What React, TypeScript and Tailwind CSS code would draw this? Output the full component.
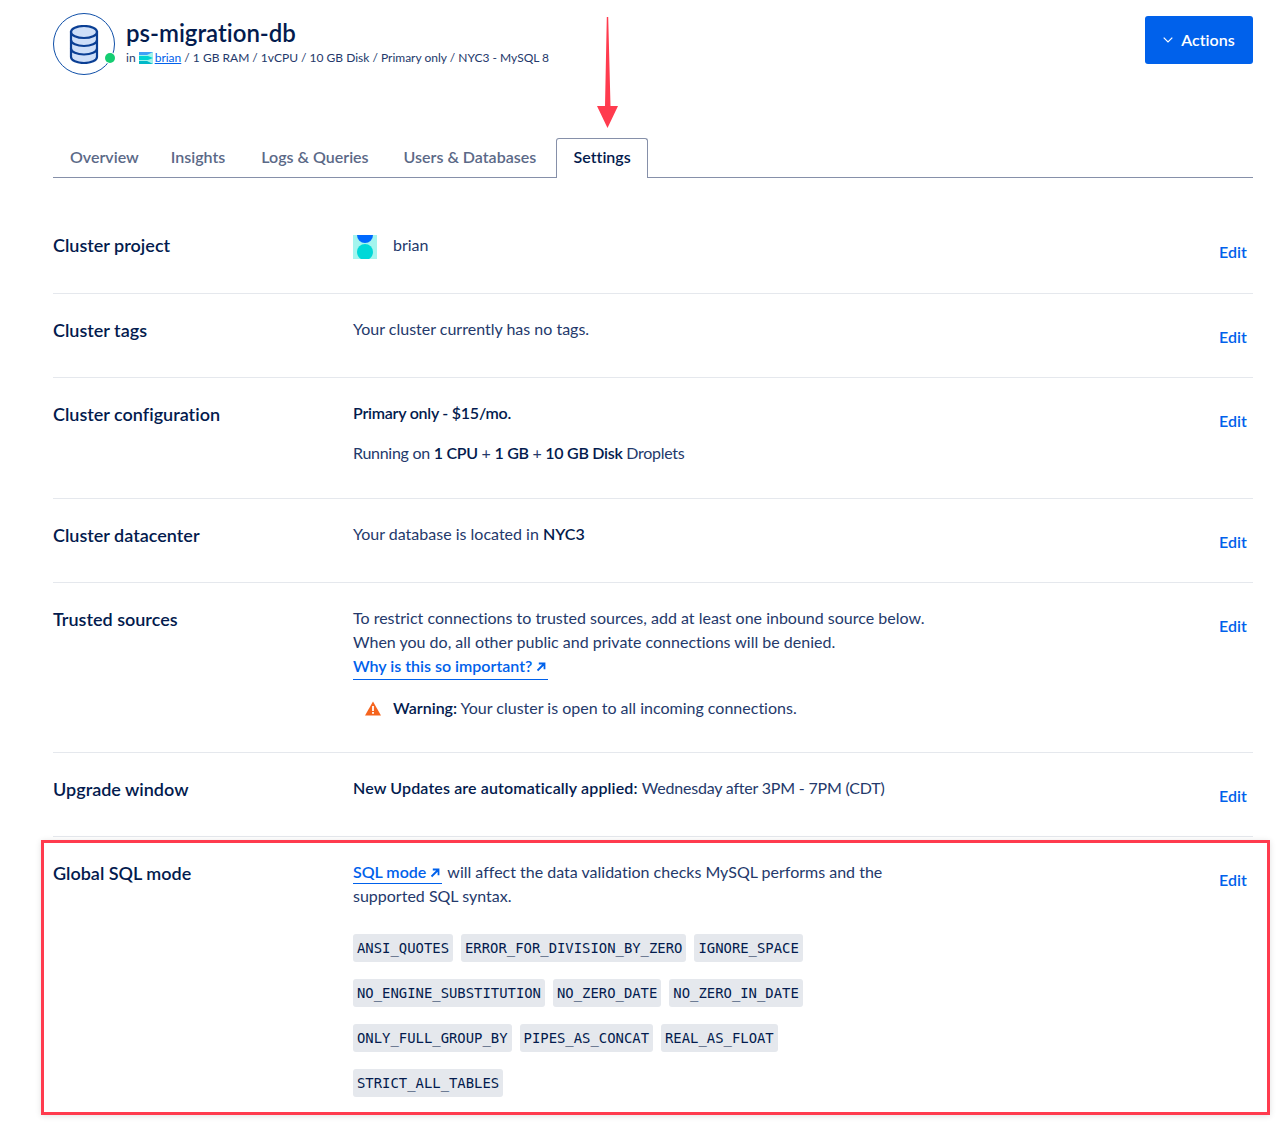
import React from 'react';

const sans = "font-['Lato','Open_Sans',sans-serif] [font-variant-ligatures:none]";

const sqlModes = [
    'ANSI_QUOTES',
    'ERROR_FOR_DIVISION_BY_ZERO',
    'IGNORE_SPACE',
    'NO_ENGINE_SUBSTITUTION',
    'NO_ZERO_DATE',
    'NO_ZERO_IN_DATE',
    'ONLY_FULL_GROUP_BY',
    'PIPES_AS_CONCAT',
    'REAL_AS_FLOAT',
    'STRICT_ALL_TABLES',
];

const DatabaseIcon = () => (
    <div className="relative w-[62px] h-[62px] shrink-0 rounded-full border border-[#0f4fa8] flex items-center justify-center">
        <svg width="30" height="39" viewBox="0 0 30 39" fill="none">
            <path d="M2 7v25c0 3.500 6 6 13 6s13-2.500 13-6V7z" fill="#cfdff8" stroke="#0b3f94" strokeWidth="2.200" />
            <ellipse cx="15" cy="7" rx="13" ry="6" fill="#cfdff8" stroke="#0b3f94" strokeWidth="2.200" />
            <path d="M2 15c0 3.500 6 6 13 6s13-2.500 13-6M2 23.500c0 3.500 6 6 13 6s13-2.500 13-6" stroke="#0b3f94" strokeWidth="2.200" />
        </svg>
        <span className="absolute right-[-1px] bottom-[11px] w-[10px] h-[10px] rounded-full bg-[#15cd72] ring-1 ring-white" />
    </div>
);

const ProjectMini = () => (
    <svg width="14" height="12" viewBox="0 0 14 12" className="inline-block mr-[2px] align-[-2px]">
        <rect width="14" height="12" fill="#9ff3ea" />
        <path d="M0 0h14L8 3H0z" fill="#0069ff" opacity="0.6" />
        <path d="M0 4h9l5 2-5 2H0z" fill="#00d3d3" />
        <path d="M0 9h8l6 3H0z" fill="#00b8c8" />
    </svg>
);

const ProjectIcon = () => (
    <div className="relative w-6 h-6 bg-[#a3f5ee] overflow-hidden shrink-0">
        <span className="absolute left-[4px] top-[-8px] w-4 h-4 rounded-full bg-[#0069ff]" />
        <span className="absolute left-[4px] top-[9px] w-4 h-4 rounded-full bg-[#00d8d8]" />
    </div>
);

const ExternalArrow = () => (
    <svg width="10" height="10" viewBox="0 0 10 10" fill="none" className="inline-block ml-[4px] align-[0px]">
        <path d="M1.500 8.500L8 2M2.800 1.500H8.500V7.200" stroke="#0061eb" strokeWidth="1.800" />
    </svg>
);

const WarningIcon = () => (
    <svg width="16" height="15" viewBox="0 0 16 15">
        <path d="M8 0.500L16 14.500H0z" fill="#f5641e" />
        <rect x="7.100" y="5" width="1.800" height="5" fill="#fff" />
        <rect x="7.100" y="11" width="1.800" height="1.800" fill="#fff" />
    </svg>
);

const SettingRow: React.FC<{ label: string; last?: boolean; children: React.ReactNode }> = ({ label, last, children }) => (
    <div className={`flex items-start ${last ? '' : 'border-b border-[#e5e8ed]'}`}>
        <div className="w-[300px] shrink-0 pt-[24px] text-[18px] leading-6 font-semibold text-[#031b4e]">{label}</div>
        <div className="flex-1 pt-[23px] pb-[33px] text-[16px] leading-6 text-[#24396b]">{children}</div>
        <a className="w-[28px] mr-[6px] mt-[31px] mb-[28px] text-[16px] leading-6 font-semibold text-[#0061eb]">Edit</a>
    </div>
);

export default function App() {
    return (
        <div className={`relative w-[1284px] h-[1123px] overflow-hidden bg-white pl-[53px] pr-[31px] pt-[13px] ${sans}`}>
            {/* header */}
            <div className="flex items-start justify-between h-[100px]">
                <div className="flex items-start gap-[11px]">
                    <DatabaseIcon />
                    <div className="pt-[5px]">
                        <h1 className="text-[24px] leading-[30px] font-semibold text-[#031b4e]">ps-migration-db</h1>
                        <div className="mt-[1px] text-[12px] leading-[18px] text-[#24396b] whitespace-nowrap">
                            in <ProjectMini /><span className="text-[#0061eb] underline">brian</span> / 1 GB RAM / 1vCPU / 10 GB Disk / Primary only / NYC3 - MySQL 8
                        </div>
                    </div>
                </div>
                <button className="mt-[3px] w-[108px] h-[48px] rounded-[3px] bg-[#0061eb] text-white text-[16px] font-semibold flex items-center justify-center gap-[8px]">
                    <svg width="10" height="6" viewBox="0 0 10 6" fill="none">
                        <path d="M0.700 0.700L5 5l4.300-4.300" stroke="#fff" strokeWidth="1.200" />
                    </svg>
                    Actions
                </button>
            </div>

            {/* tabs */}
            <div className="mt-[25px] flex items-end h-[40px] border-b border-[#8690a9] text-[16px] font-semibold leading-[37px] text-[#5b6987] whitespace-nowrap">
                <div className="pl-[17px] pr-[15px] h-[39px]">Overview</div>
                <div className="pl-[17px] pr-[19px] h-[39px]">Insights</div>
                <div className="pl-[17px] pr-[18px] h-[39px]">Logs &amp; Queries</div>
                <div className="px-[17px] h-[39px]">Users &amp; Databases</div>
                <div className="ml-[3px] w-[92px] text-center h-[40px] -mb-px leading-[36px] bg-white border border-b-0 border-[#8690a9] rounded-t-[3px] text-[#031b4e]">
                    Settings
                </div>
            </div>

            {/* rows */}
            <div className="mt-[31px]">
                <SettingRow label="Cluster project">
                    <div className="flex items-center gap-4 mt-[1px]">
                        <ProjectIcon />
                        <span className="mb-[3px]">brian</span>
                    </div>
                </SettingRow>
                <SettingRow label="Cluster tags">Your cluster currently has no tags.</SettingRow>
                <SettingRow label="Cluster configuration">
                    <p className="font-semibold text-[#031b4e] tracking-[-0.25px]">Primary only - $15/mo.</p>
                    <p className="mt-4 tracking-[-0.28px]">
                        Running on <b className="font-semibold text-[#031b4e]">1 CPU</b> + <b className="font-semibold text-[#031b4e]">1 GB</b> + <b className="font-semibold text-[#031b4e]">10 GB Disk</b> Droplets
                    </p>
                </SettingRow>
                <SettingRow label="Cluster datacenter">
                    Your database is located in <b className="font-semibold text-[#031b4e]">NYC3</b>
                </SettingRow>
                <SettingRow label="Trusted sources">
                    <p>To restrict connections to trusted sources, add at least one inbound source below.</p>
                    <p>When you do, all other public and private connections will be denied.</p>
                    <a className="block w-fit pb-px leading-[24px] font-semibold text-[#0061eb] border-b border-[#0061eb] pr-[2px]">
                        Why is this so important?<ExternalArrow />
                    </a>
                    <div className="flex items-center gap-[12px] mt-[16px] -mb-px pl-[12px]">
                        <WarningIcon />
                        <p><b className="font-semibold text-[#031b4e]">Warning:</b> Your cluster is open to all incoming connections.</p>
                    </div>
                </SettingRow>
                <SettingRow label="Upgrade window">
                    <b className="font-semibold text-[#031b4e] tracking-[0.13px]">New Updates are automatically applied:</b> <span className="tracking-[-0.2px]">Wednesday after 3PM - 7PM (CDT)</span>
                </SettingRow>
                <SettingRow label="Global SQL mode" last>
                    <div className="max-w-[540px]">
                        <a className="font-semibold text-[#0061eb] border-b border-[#0061eb] pb-[2px] pr-[2px] mr-[5px]">
                            SQL mode<ExternalArrow />
                        </a>
                        will affect the data validation checks MySQL performs and the supported SQL syntax.
                        <div className="flex flex-wrap gap-x-[8px] gap-y-[17px] mt-[26px]">
                            {sqlModes.map((mode) => (
                                <code key={mode} className="h-[28px] leading-[28px] px-[4px] rounded-[3px] bg-[#e5e8ed] text-[13.9px] text-[#031b4e] font-['DejaVu_Sans_Mono',monospace]">
                                    {mode}
                                </code>
                            ))}
                        </div>
                    </div>
                </SettingRow>
            </div>

            {/* red annotations over the screenshot */}
            <div className="absolute left-[41px] top-[840px] w-[1229px] h-[275px] border-[3px] border-[#ff3b4e] shadow-[0_1px_6px_rgba(0,0,0,0.12)] pointer-events-none" />
            <svg className="absolute left-[596px] top-[15px]" width="24" height="116" viewBox="0 0 24 116">
                <path d="M10.800 2h1.400L14.500 91H22L11.500 113 1 91h8z" fill="#ff3b4e" />
            </svg>
        </div>
    );
}
